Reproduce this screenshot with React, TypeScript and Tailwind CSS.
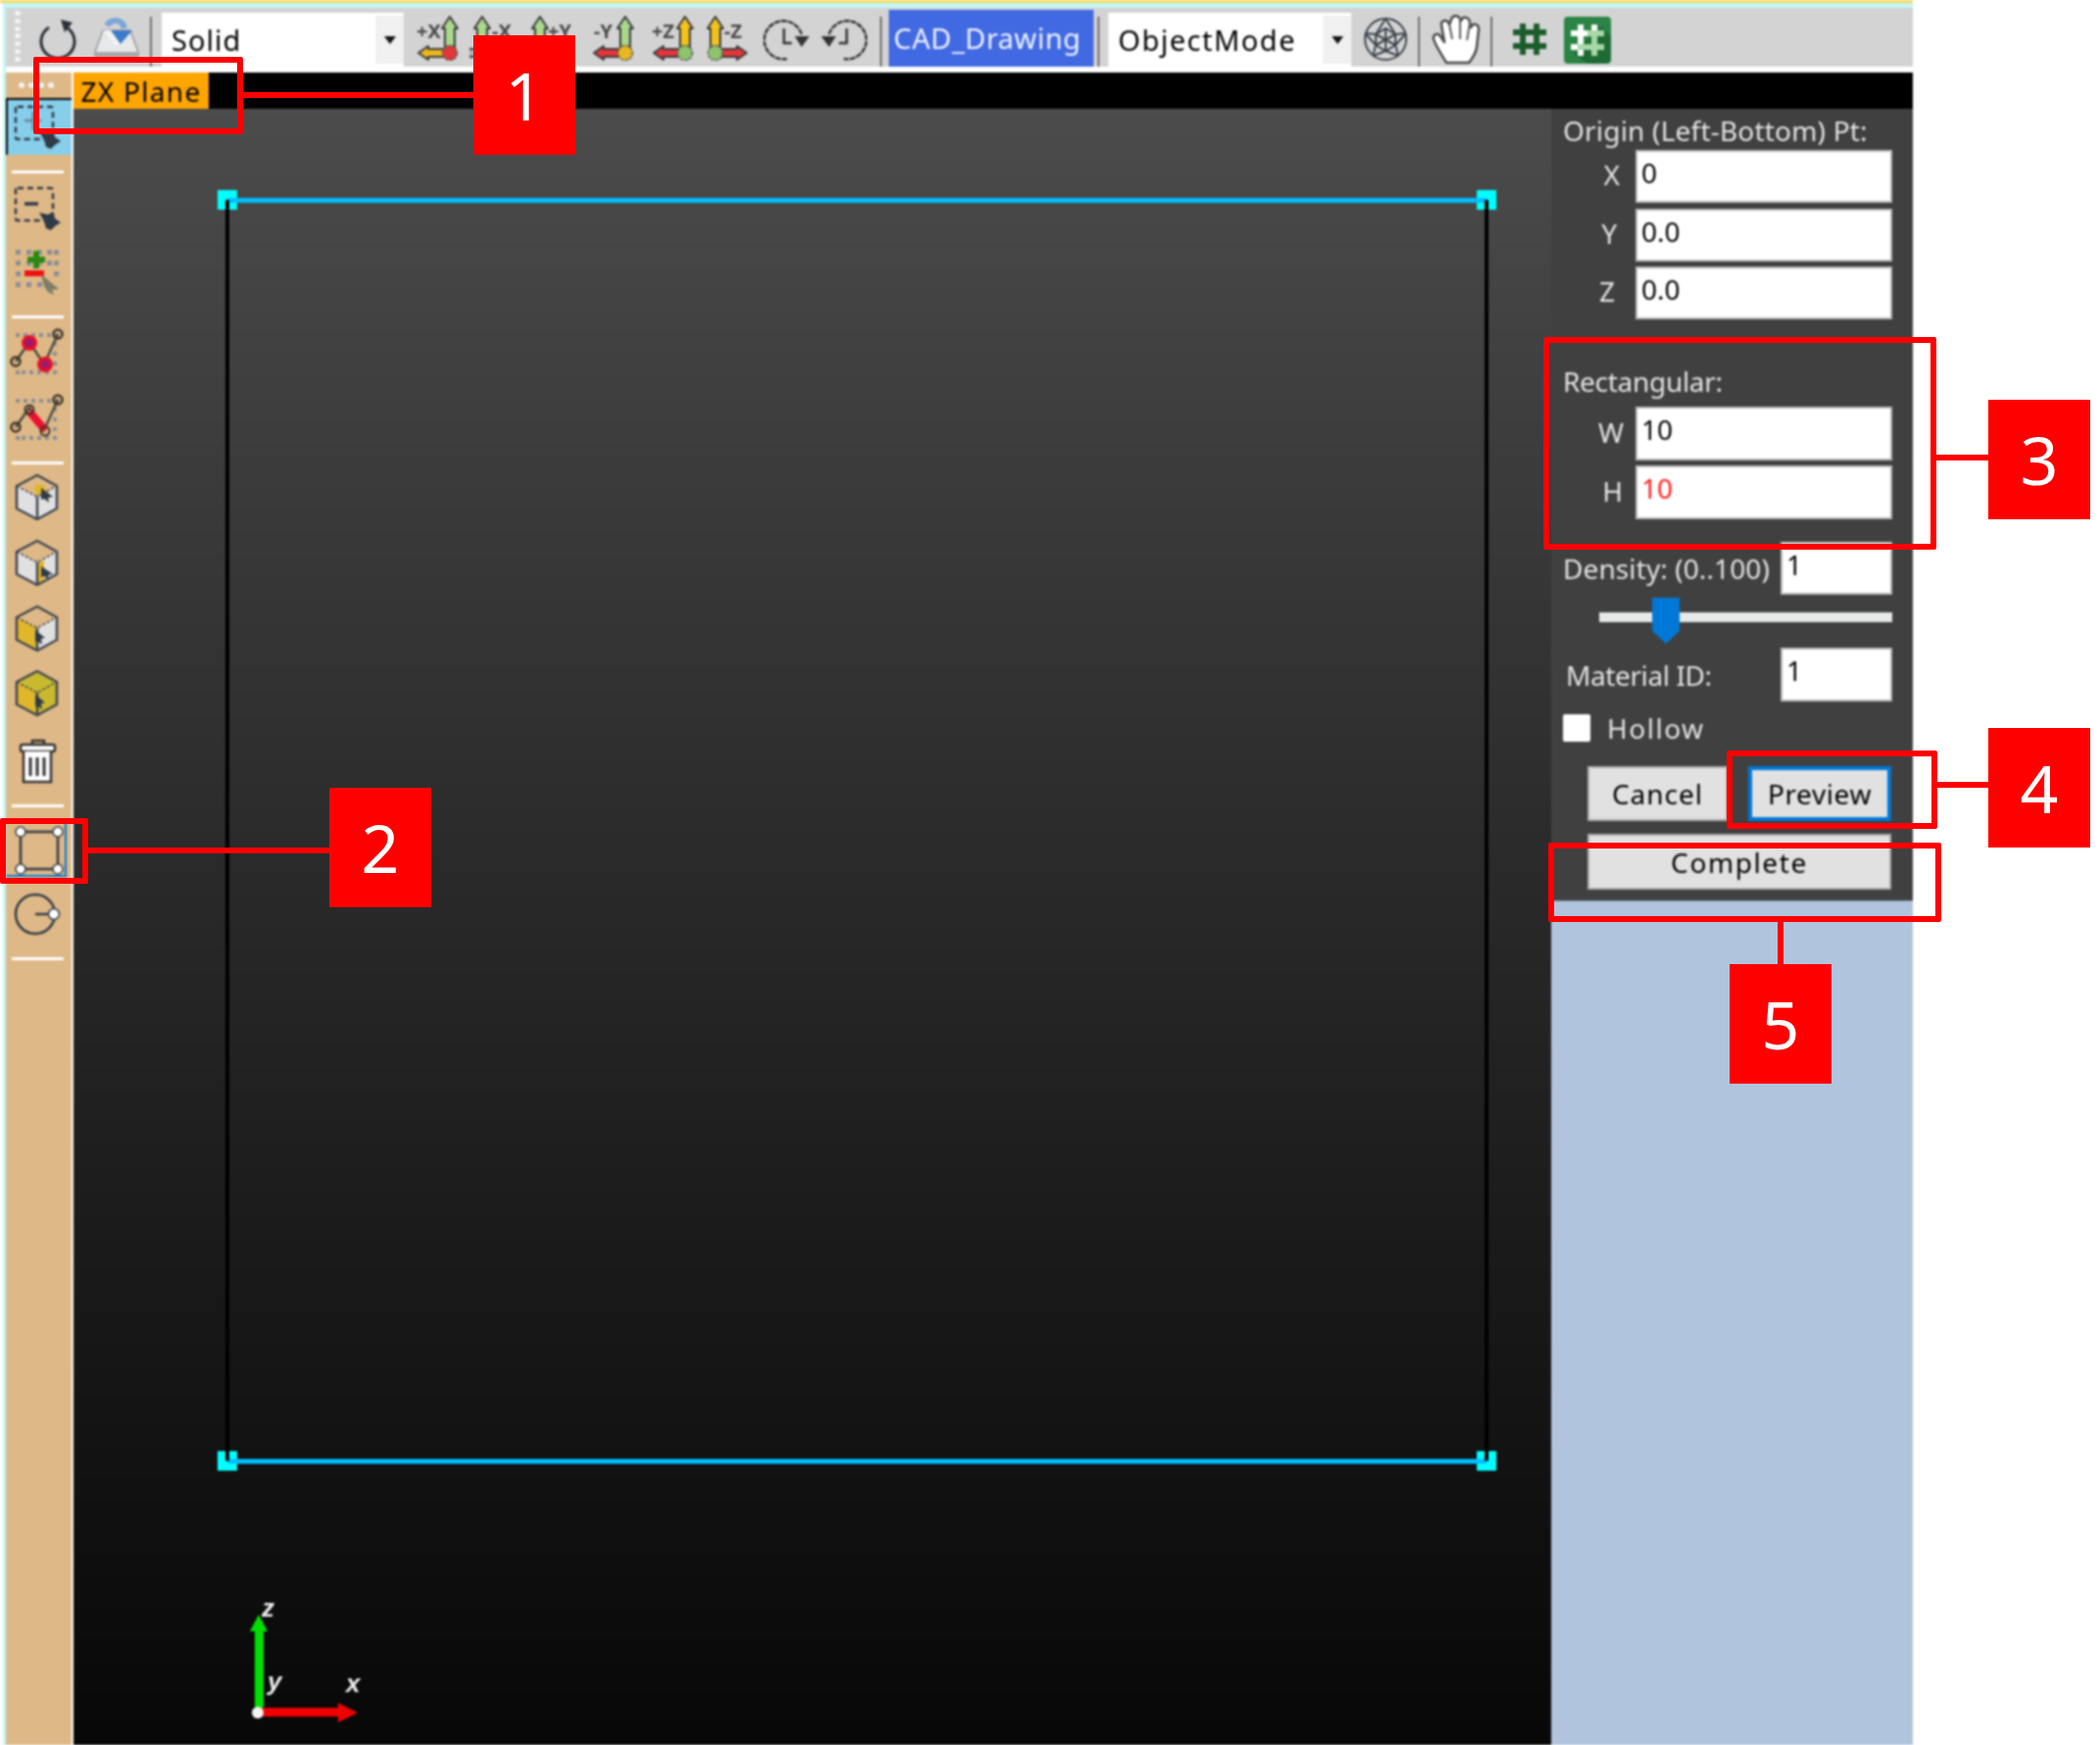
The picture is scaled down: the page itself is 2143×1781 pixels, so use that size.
import React from "react";

const Caret = () => (
  <svg width="12" height="8" viewBox="0 0 12 8"><polygon points="0,0 12,0 6,8" fill="#111" /></svg>
);

function Select({ label, w, arrow, track }: { label: string; w: string; arrow: string; track: string }) {
  return (
    <div className={`${w} h-[55px] mt-[5px] bg-white flex items-center justify-between text-black text-[29px] self-start`}>
      <span className={`${track} pl-[10px]`}>{label}</span>
      <span className={`${arrow} h-[49px] bg-[#f0f0f0] flex items-center justify-center`}><Caret /></span>
    </div>
  );
}

const Sep = ({ cls }: { cls: string }) => <div className={`w-[2px] h-[58px] bg-[#6e6e6e] self-start mt-[9px] ${cls}`} />;

function Axis({ vx, text, tx, up, side, dot, dir, plus }: { vx: number; text: string; tx: number; up: string; side: string; dot: string; dir: "l" | "r"; plus?: boolean }) {
  const y = 40;
  const far = dir === "l" ? vx - 32 : vx + 32;
  const neck = dir === "l" ? vx - 22 : vx + 22;
  return (
    <svg width="50" height="48" viewBox="0 0 50 48" className="shrink-0 mt-[6px] self-start">
      <text x={tx} y="25" fontSize="20" fontWeight="700" fill={plus ? "#666" : "#4a4a4a"} fontFamily="'Noto Sans', sans-serif">{text}</text>
      <polygon points={`${vx},3 ${vx + 8},15 ${vx + 5},15 ${vx + 5},${y} ${vx - 5},${y} ${vx - 5},15 ${vx - 8},15`} fill={up} stroke="#3a3a3a" strokeWidth="2" strokeLinejoin="round" />
      <polygon points={`${far},${y} ${neck},${y - 7} ${neck},${y - 4} ${vx},${y - 4} ${vx},${y + 4} ${neck},${y + 4} ${neck},${y + 7}`} fill={side} stroke="#3a3a3a" strokeWidth="2" strokeLinejoin="round" />
      <circle cx={vx} cy={y} r="7.5" fill={dot} stroke="#555" strokeWidth="1.5" strokeDasharray="3 1.5" />
    </svg>
  );
}

function Clock({ flip }: { flip?: boolean }) {
  return (
    <svg width="48" height="44" viewBox="0 0 48 44" className={`shrink-0 mt-[11px] self-start ${flip ? "-scale-x-100" : ""}`}>
      <path d="M39 16 A19.5 19.5 0 1 0 24 41" fill="none" stroke="#333" strokeWidth="2.5" strokeDasharray="6 1" />
      <polygon points="32,18 47,18 39,29" fill="#333" />
      <path d="M21 10 V25 H29" fill="none" stroke="#333" strokeWidth="2.5" />
    </svg>
  );
}

function DashedSelect({ minus }: { minus?: boolean }) {
  return (
    <svg width="67" height="50" viewBox="0 0 67 50">
      <rect x="10" y="3" width="38" height="33" rx="2" fill="none" stroke="#2f3a46" strokeWidth="2.5" strokeDasharray="6 4" />
      <path d={minus ? "M19 19 H33" : "M19 17 H36 M28 8 V27"} stroke={minus ? "#2f3a46" : "#6f8a98"} strokeWidth={minus ? 3.5 : 3} />
      <polygon points="34,28 43,30 48,27 50,34 56,38 50,42 46,46 41,44 39,37" fill="#2f3a46" />
    </svg>
  );
}

const dots = (xs: number[], ys: number[], fill: string, s = 5) =>
  xs.flatMap((x) => ys.map((y) => <rect key={`${x}-${y}`} x={x} y={y} width={s} height={s} fill={fill} />));

function GridPlus() {
  return (
    <svg width="67" height="50" viewBox="0 0 67 50">
      {dots([10, 21, 32, 42, 49], [3, 14], "#8b8f96")}
      {dots([10], [25, 36], "#8b8f96")}
      {dots([49], [25], "#8b8f96")}
      {dots([21, 32], [36], "#8b8f96")}
      <path d="M22 13 H40 M31 4 V22" stroke="#2a8a12" strokeWidth="6" />
      <rect x="19" y="24" width="20" height="6" fill="#ef1010" />
      <polygon points="36,28 54,43 47,44 49,49 43,46 39,40" fill="#7d7d66" />
    </svg>
  );
}

function Poly({ bar }: { bar?: boolean }) {
  return (
    <svg width="67" height="50" viewBox="4 0 67 50">
      {dots([14, 22, 30, 38, 46, 54], [5], "#8b8f96", 4)}
      {dots([14, 20, 28, 36, 44, 52], [43], "#8b8f96", 4)}
      {dots([52], [14, 24, 34], "#8b8f96", 4)}
      <path d="M14 34 L28 14 L43 37 L57 6" fill="none" stroke="#4a4a3e" strokeWidth="2.5" />
      {bar ? <path d="M28 18 L44 37" stroke="#ee1030" strokeWidth="8" /> : <><circle cx="28" cy="15" r="6.5" fill="#a01868" stroke="#f01020" strokeWidth="3" /><circle cx="44" cy="37" r="6.5" fill="#a01868" stroke="#f01020" strokeWidth="3" /></>}
      <circle cx="14" cy="34" r="4.5" fill="none" stroke="#3c3428" strokeWidth="2.5" />
      <circle cx="57" cy="6" r="4.5" fill="none" stroke="#3c3428" strokeWidth="2.5" />
      {bar ? <circle cx="44" cy="38" r="4.5" fill="none" stroke="#3c3428" strokeWidth="2" /> : null}
      {bar ? <circle cx="28" cy="16" r="4.5" fill="none" stroke="#3c3428" strokeWidth="2" /> : null}
    </svg>
  );
}

function Cube({ top, left, right, hi }: { top: string; left: string; right: string; hi?: string }) {
  return (
    <svg width="67" height="50" viewBox="6 0 67 50">
      <polygon points="38,2 58,13 38,24 17,13" fill={top} />
      <polygon points="17,13 38,24 38,47 17,36" fill={left} />
      <polygon points="58,13 38,24 38,47 58,36" fill={right} />
      {hi === "top" ? <polygon points="36,11 44,12 49,20 38,22 35,17" fill="#e0b62a" /> : null}
      {hi === "mid" ? <polygon points="38,24 45,22 45,42 38,46" fill="#e0b62a" /> : null}
      <path d="M17 13 L38 2 L58 13 V36 L38 47 L17 36 Z M38 47 V24" fill="none" stroke="#3f4650" strokeWidth="2.5" strokeLinejoin="round" />
      <path d="M17 13 L38 24 L58 13" fill="none" stroke="#3f4650" strokeWidth="1.5" strokeDasharray="3 2" />
      <polygon points={hi === "top" ? "42,15 54,24 49,25 50,30 45,26 42,27" : hi === "mid" ? "42,28 54,36 49,37 50,42 45,38 42,39" : "36,26 46,34 42,35 43,41 38,37 36,38"} fill="#2f3a46" />
    </svg>
  );
}

function Trash() {
  return (
    <svg width="67" height="50" viewBox="6 0 67 50">
      <path d="M33 7 V3 H45 V7" fill="none" stroke="#333" strokeWidth="2.5" />
      <rect x="21" y="7" width="35" height="7" rx="2" fill="#fff" stroke="#333" strokeWidth="2.5" />
      <path d="M24 14 V45 H52 V14" fill="#fff" stroke="#333" strokeWidth="2.5" />
      <path d="M31 20 V39 M38 20 V39 M45 20 V39" stroke="#333" strokeWidth="3" />
    </svg>
  );
}

function RectTool() {
  return (
    <svg width="60" height="53" viewBox="0 0 60 53">
      <rect x="15" y="9" width="38" height="38" fill="none" stroke="#2f3a46" strokeWidth="2.5" />
      {[[15, 9], [53, 9], [15, 47], [53, 47]].map(([x, y]) => <circle key={`${x}${y}`} cx={x} cy={y} r="5" fill="#fff" stroke="#2f3a46" strokeWidth="1.5" />)}
    </svg>
  );
}

function CircleTool() {
  return (
    <svg width="67" height="50" viewBox="7 0 67 50">
      <circle cx="37" cy="25" r="20" fill="none" stroke="#2f3a46" strokeWidth="2.5" />
      <path d="M37 25 H56" stroke="#2f3a46" strokeWidth="2.5" />
      <circle cx="56" cy="25" r="5.5" fill="#fff" stroke="#2f3a46" strokeWidth="1.5" />
    </svg>
  );
}

const ToolSep = ({ cls }: { cls: string }) => <div className={`${cls} ml-[6px] w-[53px] h-[3px] bg-white shrink-0`} />;

function Field({ label, pr, color, value, mt, h }: { label: string; pr: string; color?: string; value: string; mt: string; h?: string }) {
  return (
    <div className={`flex items-center ${mt}`}>
      <div className={`w-[74px] text-right text-[28px] leading-[38px] pb-[4px] text-[#e4e4e4] ${pr}`}>{label}</div>
      <Box cls={`flex-1 ${h ?? "h-[54px]"} ${color ?? "text-black"}`} value={value} />
    </div>
  );
}

function Box({ cls, value }: { cls: string; value: string }) {
  return (
    <div className={`${cls} bg-white border-2 border-[#b8b8b8] pl-[4px] flex items-start text-[28px] leading-[42px]`}>{value}</div>
  );
}

function Handle({ cls }: { cls: string }) {
  return <div className={`absolute w-[20px] h-[20px] bg-[#00ffff] ${cls}`} />;
}

function RedBox({ cls }: { cls: string }) {
  return <div className={`absolute border-[6px] border-[#ff0000] rounded-[2px] ${cls}`} />;
}

function RedBar({ cls }: { cls: string }) {
  return <div className={`absolute bg-[#ff0000] ${cls}`} />;
}

function Tag({ cls, n }: { cls: string; n: string }) {
  return <div className={`absolute w-[104px] h-[122px] bg-[#ff0000] text-white text-[68px] leading-none flex items-center justify-center ${cls}`}>{n}</div>;
}

export default function App() {
  return (
    <div className="relative w-[2143px] h-[1781px] bg-white overflow-hidden font-['Noto_Sans',sans-serif]">
      <div className="w-[1952px] h-full flex flex-col blur-[0.8px]">
        <div className="h-[3px] bg-[#f6d95a] shrink-0" />
        <div className="flex-1 min-h-0 pl-[3px]">
          <div className="h-full bg-[#c4f6f6] pl-[3px] pt-[5px] flex flex-col">
            <div className="h-[60px] shrink-0 bg-[#d3d3d3] flex items-start overflow-hidden">
              <div className="ml-[9px] mt-[3px] w-[7px] h-[52px] flex flex-col justify-between shrink-0">
                {[0, 1, 2, 3, 4, 5, 6].map((i) => <div key={i} className="w-[6px] h-[5px] bg-[#f4f4f4] rounded-full" />)}
              </div>
              <svg width="40" height="42" viewBox="0 0 40 42" className="ml-[18px] mt-[11px] shrink-0">
                <path d="M10 9 A17 17 0 1 0 28 9" fill="none" stroke="#2b3138" strokeWidth="3" />
                <polygon points="22,1 34,4 26,14" fill="#2b3138" />
              </svg>
              <svg width="48" height="44" viewBox="0 0 48 44" className="ml-[15px] mt-[9px] shrink-0">
                <polygon points="2,36 10,14 38,14 46,36 46,44 2,44" fill="#e6e8ea" stroke="#9a9a9a" strokeWidth="1.5" />
                <rect x="2" y="36" width="44" height="8" fill="#a8a8a8" />
                <polygon points="10,14 24,30 38,14" fill="#f4f4f4" />
                <path d="M14 9 C20 1 30 3 32 12" fill="none" stroke="#7aa6d8" strokeWidth="6" />
                <polygon points="18,14 40,14 28,28" fill="#3d7cc9" />
              </svg>
              <Sep cls="ml-[10px]" />
              <Select label="Solid" w="ml-[10px] w-[247px]" arrow="w-[29px]" track="tracking-[1px]" />
              <div className="ml-[13px]"><Axis vx={34} text="+X" tx={0} up="#a9d88b" side="#e9b71f" dot="#e2363a" dir="l" /></div>
              <div className="ml-[4px]"><Axis vx={13} text="-X" tx={23} up="#a9d88b" side="#b0b0b0" dot="#9a9a9a" dir="l" /></div>
              <div className="ml-[8px]"><Axis vx={14} text="+Y" tx={22} up="#a9d88b" side="#b0b0b0" dot="#9a9a9a" dir="l" /></div>
              <div className="ml-[17px]"><Axis vx={34} text="-Y" tx={2} up="#a9d88b" side="#e2363a" dot="#e9b71f" dir="l" /></div>
              <div className="ml-[11px]"><Axis vx={34} text="+Z" tx={0} up="#f3c21c" side="#e2363a" dot="#8ec46e" dir="l" /></div>
              <Axis vx={15} text="-Z" tx={24} up="#f3c21c" side="#e2363a" dot="#8ec46e" dir="r" />
              <div className="ml-[14px]"><Clock /></div>
              <div className="ml-[10px]"><Clock flip /></div>
              <Sep cls="ml-[13px]" />
              <div className="ml-[7px] w-[209px] h-[58px] mt-[2px] pr-[8px] bg-[#4169e1] text-[#eef2ff] text-[29px] tracking-[0.5px] flex items-center justify-center shrink-0">CAD_Drawing</div>
              <Sep cls="ml-[4px]" />
              <Select label="ObjectMode" w="ml-[9px] w-[248px]" arrow="w-[29px]" track="tracking-[1.5px]" />
              <svg width="46" height="46" viewBox="0 0 46 46" className="ml-[12px] mt-[9px] shrink-0">
                <g fill="none" stroke="#3a424a" strokeWidth="2">
                  <circle cx="23" cy="23" r="21" />
                  <polygon points="23,12 33,18 33,29 23,35 13,29 13,18" />
                  <path d="M23 2 L13 18 M23 2 L33 18 M44 17 L33 18 M44 17 L33 29 M36 40 L33 29 M36 40 L23 35 M10 40 L23 35 M10 40 L13 29 M2 17 L13 29 M2 17 L13 18 M23 12 L23 35 M13 18 L33 29 M33 18 L13 29" />
                </g>
              </svg>
              <Sep cls="ml-[10px]" />
              <svg width="50" height="52" viewBox="0 0 50 52" className="ml-[12px] mt-[6px] shrink-0">
                <path d="M15 50 C11 43 4 33 2 26 C1 21 6 19 9 23 L13 29 L10 12 C9 6 16 5 18 11 L20 6 C21 1 28 1 29 6 L30 7 C32 2 38 3 39 9 L40 14 C42 9 48 10 48 16 L46 34 C45 42 40 47 38 50 Z" fill="#ffffff" stroke="#4a4a4a" strokeWidth="2.5" strokeLinejoin="round" />
                <path d="M18 11 L21 26 M29 6 L29 26 M39 9 L36 27" fill="none" stroke="#5a5a5a" strokeWidth="2" />
              </svg>
              <Sep cls="ml-[10px]" />
              <svg width="36" height="36" viewBox="0 0 36 36" className="ml-[20px] mt-[14px] shrink-0">
                <path d="M11 2 V34 M25 2 V34 M1 11 H35 M1 25 H35" stroke="#1c5c2c" strokeWidth="6" />
              </svg>
              <svg width="48" height="48" viewBox="0 0 48 48" className="ml-[17px] mt-[9px] shrink-0">
                <rect width="48" height="48" rx="4" fill="#2b8344" />
                <polygon points="24,48 44,48 48,44 48,20 38,10 10,38" fill="#1d6a34" />
                <path d="M17 8 V40 M31 8 V40 M7 17 H41 M7 31 H41" stroke="#ffffff" strokeWidth="6" />
                <path d="M31 14 V40 M14 31 H41 M41 17 H24" stroke="#a9d8a8" strokeWidth="6" />
              </svg>
            </div>
            <div className="h-[6px] shrink-0 bg-white" />
            <div className="flex-1 min-h-0 flex">
              <div className="w-[67px] shrink-0 bg-[#deb887] flex flex-col">
                <div className="h-[26px] shrink-0 flex items-center gap-[4px] pl-[13px]">
                  {[0, 1, 2, 3].map((i) => <div key={i} className="w-[6px] h-[6px] rounded-full bg-[#f2f2f2]" />)}
                </div>
                <div className="h-[58px] shrink-0 bg-[#87ceeb] border-l-2 border-t-2 border-black"><div className="pt-[4px] -ml-[2px]"><DashedSelect /></div></div>
                <ToolSep cls="mt-[16px]" />
                <div className="mt-[12px] shrink-0"><DashedSelect minus /></div>
                <div className="mt-[13px] shrink-0"><GridPlus /></div>
                <ToolSep cls="mt-[20px]" />
                <div className="mt-[10px] shrink-0"><Poly /></div>
                <div className="mt-[17px] shrink-0"><Poly bar /></div>
                <ToolSep cls="mt-[19px]" />
                <div className="mt-[9px] shrink-0"><Cube top="#deb887" left="#e0e0e0" right="#e0e0e0" hi="top" /></div>
                <div className="mt-[17px] shrink-0"><Cube top="#deb887" left="#e0e0e0" right="#e0e0e0" hi="mid" /></div>
                <div className="mt-[17px] shrink-0"><Cube top="#deb887" left="#e0b62a" right="#e0e0e0" /></div>
                <div className="mt-[16px] shrink-0"><Cube top="#c9b92f" left="#e0b62a" right="#c9b92f" /></div>
                <div className="mt-[20px] shrink-0"><Trash /></div>
                <ToolSep cls="mt-[18px]" />
                <div className="mt-[16px] h-[55px] w-[62px] shrink-0 border-r-2 border-b-2 border-[#0078d7]"><RectTool /></div>
                <div className="mt-[13px] shrink-0"><CircleTool /></div>
                <ToolSep cls="mt-[19px]" />
              </div>
              <div className="w-[2px] shrink-0 bg-white" />
              <div className="flex-1 min-w-0 flex flex-col">
                <div className="h-[37px] shrink-0 bg-black">
                  <div className="w-[138px] h-full bg-[#ffa500] text-black text-[28px] tracking-[1.3px] flex items-center justify-center">ZX Plane</div>
                </div>
                <div className="flex-1 min-h-0 flex">
                  <div className="relative flex-1 min-w-0 bg-gradient-to-b from-[#4c4c4c] to-[#080808]">
                    <Handle cls="left-[147px] top-[83px]" />
                    <Handle cls="left-[1432px] top-[83px]" />
                    <Handle cls="left-[147px] top-[1370px]" />
                    <Handle cls="left-[1432px] top-[1370px]" />
                    <div className="absolute left-[157px] top-[91px] w-[1285px] h-[5px] bg-[#00bfff]" />
                    <div className="absolute left-[157px] top-[1378px] w-[1285px] h-[5px] bg-[#00bfff]" />
                    <div className="absolute left-[155px] top-[93px] w-[4px] h-[1287px] bg-black" />
                    <div className="absolute left-[1440px] top-[93px] w-[4px] h-[1287px] bg-black" />
                    <svg width="125" height="145" viewBox="0 -15 125 145" className="absolute left-[178px] top-[1506px]">
                      <rect x="7" y="30" width="9" height="86" fill="#00e000" />
                      <polygon points="11,16 2,33 20,33" fill="#00e000" />
                      <rect x="11" y="111" width="84" height="9" fill="#f00000" />
                      <polygon points="112,116 92,106 92,126" fill="#f00000" />
                      <circle cx="10" cy="116" r="6" fill="#f4f4f4" />
                      <g fill="#f0f0f0" fontSize="26" fontStyle="italic" fontWeight="700" fontFamily="'Liberation Sans', sans-serif">
                        <text x="14" y="18">z</text>
                        <text x="20" y="93">y</text>
                        <text x="100" y="95">x</text>
                      </g>
                    </svg>
                  </div>
                  <div className="w-[369px] shrink-0 flex flex-col">
                    <div className="h-[809px] shrink-0 bg-[#404040] pl-[12px] pr-[21px] border-b border-[#8a9ab0]">
                      <div className="h-[42px] pt-[2px] flex items-center text-[28px] text-[#e4e4e4] tracking-[0.2px] whitespace-nowrap">Origin (Left-Bottom) Pt:</div>
                      <Field label="X" pr="pr-[16px]" value="0" mt="" />
                      <Field label="Y" pr="pr-[19px]" value="0.0" mt="mt-[6px]" />
                      <Field label="Z" pr="pr-[21px]" value="0.0" mt="mt-[5px]" />
                      <div className="mt-[42px] h-[42px] flex items-center text-[28px] text-[#e4e4e4] tracking-[-0.3px]">Rectangular:</div>
                      <Field label="W" pr="pr-[12px]" value="10" mt="mt-[5px]" h="h-[55px]" />
                      <Field label="H" pr="pr-[13px]" value="10" color="text-[#ff1a1a]" mt="mt-[5px]" h="h-[55px]" />
                      <div className="mt-[23px] flex items-center justify-between">
                        <span className="text-[28px] leading-[40px] text-[#e4e4e4] tracking-[0.1px] whitespace-nowrap">Density: (0..100)</span>
                        <Box cls="w-[114px] h-[54px] text-black" value="1" />
                      </div>
                      <div className="relative mt-[3px] h-[47px]">
                        <div className="absolute left-[37px] right-0 top-[15px] h-[10px] bg-[#e6e9e8]" />
                        <svg width="28" height="47" viewBox="0 0 28 47" className="absolute left-[91px] top-0">
                          <polygon points="0,0 28,0 28,34 14,47 0,34" fill="#0078d7" />
                        </svg>
                      </div>
                      <div className="mt-[4px] flex items-center justify-between">
                        <span className="pl-[3px] text-[28px] leading-[40px] text-[#e4e4e4] tracking-[-0.4px]">Material ID:</span>
                        <Box cls="w-[114px] h-[55px] text-black" value="1" />
                      </div>
                      <div className="mt-[13px] h-[28px] flex items-center gap-[17px]">
                        <div className="w-[28px] h-[28px] bg-white rounded-[2px]" />
                        <span className="text-[28px] tracking-[1.5px] text-[#e4e4e4]">Hollow</span>
                      </div>
                      <div className="mt-[25px] ml-[25px] flex gap-[21px]">
                        <div className="w-[143px] h-[56px] bg-[#e1e1e1] border-2 border-[#adadad] flex items-center justify-center text-[28px] tracking-[1px] text-black">Cancel</div>
                        <div className="w-[146px] h-[56px] bg-[#e1e1e1] border-[4px] border-[#0078d7] flex items-center justify-center text-[28px] tracking-[0.6px] text-black">Preview</div>
                      </div>
                      <div className="mt-[13px] ml-[25px] w-[310px] h-[57px] bg-[#e1e1e1] border-2 border-[#adadad] flex items-center justify-center text-[28px] tracking-[1.6px] text-black">Complete</div>
                    </div>
                    <div className="flex-1 bg-[#b0c4de]" />
                  </div>
                </div>
              </div>
            </div>
          </div>
        </div>
      </div>

      <RedBox cls="left-[34px] top-[58px] w-[214px] h-[79px]" />
      <RedBar cls="left-[248px] top-[94px] w-[236px] h-[6px]" />
      <Tag cls="left-[483px] top-[36px]" n="1" />

      <RedBox cls="left-0 top-[835px] w-[90px] h-[67px]" />
      <RedBar cls="left-[90px] top-[865px] w-[246px] h-[6px]" />
      <Tag cls="left-[336px] top-[804px]" n="2" />

      <RedBox cls="left-[1575px] top-[344px] w-[401px] h-[217px]" />
      <RedBar cls="left-[1976px] top-[464px] w-[53px] h-[6px]" />
      <Tag cls="left-[2029px] top-[408px]" n="3" />

      <RedBox cls="left-[1762px] top-[766px] w-[215px] h-[80px]" />
      <RedBar cls="left-[1977px] top-[798px] w-[52px] h-[6px]" />
      <Tag cls="left-[2029px] top-[743px]" n="4" />

      <RedBox cls="left-[1580px] top-[860px] w-[401px] h-[81px]" />
      <RedBar cls="left-[1814px] top-[941px] w-[6px] h-[43px]" />
      <Tag cls="left-[1765px] top-[984px]" n="5" />
    </div>
  );
}
